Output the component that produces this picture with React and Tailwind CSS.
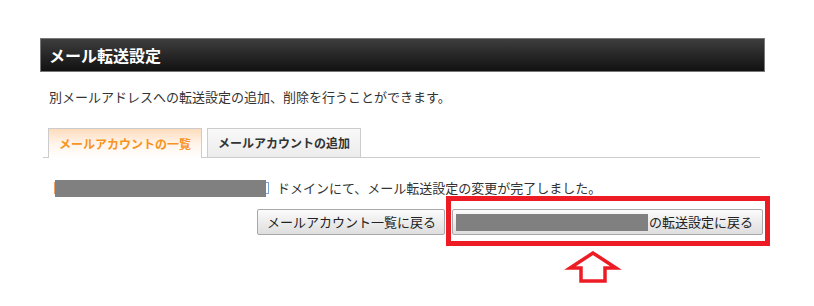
export default function App() {
  const font = { fontFamily: '"Noto Sans CJK JP", "Noto Sans", sans-serif' };
  return (
    <div className="relative w-[814px] h-[306px] bg-white overflow-hidden" style={font}>
      <div className="pl-[40px] pt-[38px] w-[765px]">
        <div className="h-[34px] border border-[#777] bg-gradient-to-b from-[#3e3e3e] to-[#121212] flex items-center pl-[8px] text-white font-bold text-[16px] leading-none">
          メール転送設定
        </div>
        <p className="mt-[16px] pl-[9px] text-[13px] leading-[18px] text-[#333]">
          別メールアドレスへの転送設定の追加、削除を行うことができます。
        </p>
        <div className="mt-[22px] ml-[3px] mr-[5px] border-b border-[#ccc] flex pl-[5px] gap-[5px] h-[30px]">
          <div className="w-[154px] h-[30px] border border-b-0 border-[#ccc] bg-gradient-to-b from-[#fddcbc] via-[#fff4ea] to-white flex items-center justify-center text-[12px] font-bold text-[#f7931e]">
            メールアカウントの一覧
          </div>
          <div className="w-[154px] h-[29px] border border-b-0 border-[#ccc] bg-gradient-to-b from-[#f9f9f9] to-[#ececec] flex items-center justify-center text-[12px] font-bold text-[#333]">
            メールアカウントの追加
          </div>
        </div>
        <div className="mt-[21px] pl-[14px] flex items-center h-[18px] text-[13px] leading-[18px] text-[#333]">
          <span className="w-[1px] h-[12px] bg-[#f0a060]"></span>
          <span className="w-[211px] h-[17px] bg-[#808080]"></span>
          <span className="w-[3px] h-[12px] border border-l-0 border-[#7aa7d8]"></span>
          <span className="ml-[8px]">ドメインにて、メール転送設定の変更が完了しました。</span>
        </div>
        <div className="mt-[12px] pr-[2px] flex justify-end gap-[7px]">
          <button className="w-[188px] h-[26px] border border-[#a8a8a8] rounded-[2px] bg-gradient-to-b from-[#fbfbfb] to-[#dedede] text-[13px] text-[#222] flex items-center pl-[9px]">
            メールアカウント一覧に戻る
          </button>
          <div className="relative">
            <button className="w-[311px] h-[26px] border border-[#a8a8a8] rounded-[2px] bg-gradient-to-b from-[#fbfbfb] to-[#dedede] text-[13px] text-[#222] flex items-center pl-[3px]">
              <span className="w-[192px] h-[17px] bg-[#808080]"></span>
              <span className="ml-[1px]">の転送設定に戻る</span>
            </button>
            <div className="absolute left-[-6px] top-[-13px] w-[324px] h-[50px] border-[5px] border-[#ed1c24]"></div>
          </div>
        </div>
      </div>
      <svg className="absolute left-[562px] top-[248px]" width="62" height="38" viewBox="0 0 62 38">
        <polygon
          points="31,5 8,20 19,20 19,33 43,33 43,20 54,20"
          fill="none"
          stroke="#ed1c24"
          strokeWidth="3.5"
          strokeLinejoin="miter"
        />
      </svg>
    </div>
  );
}
